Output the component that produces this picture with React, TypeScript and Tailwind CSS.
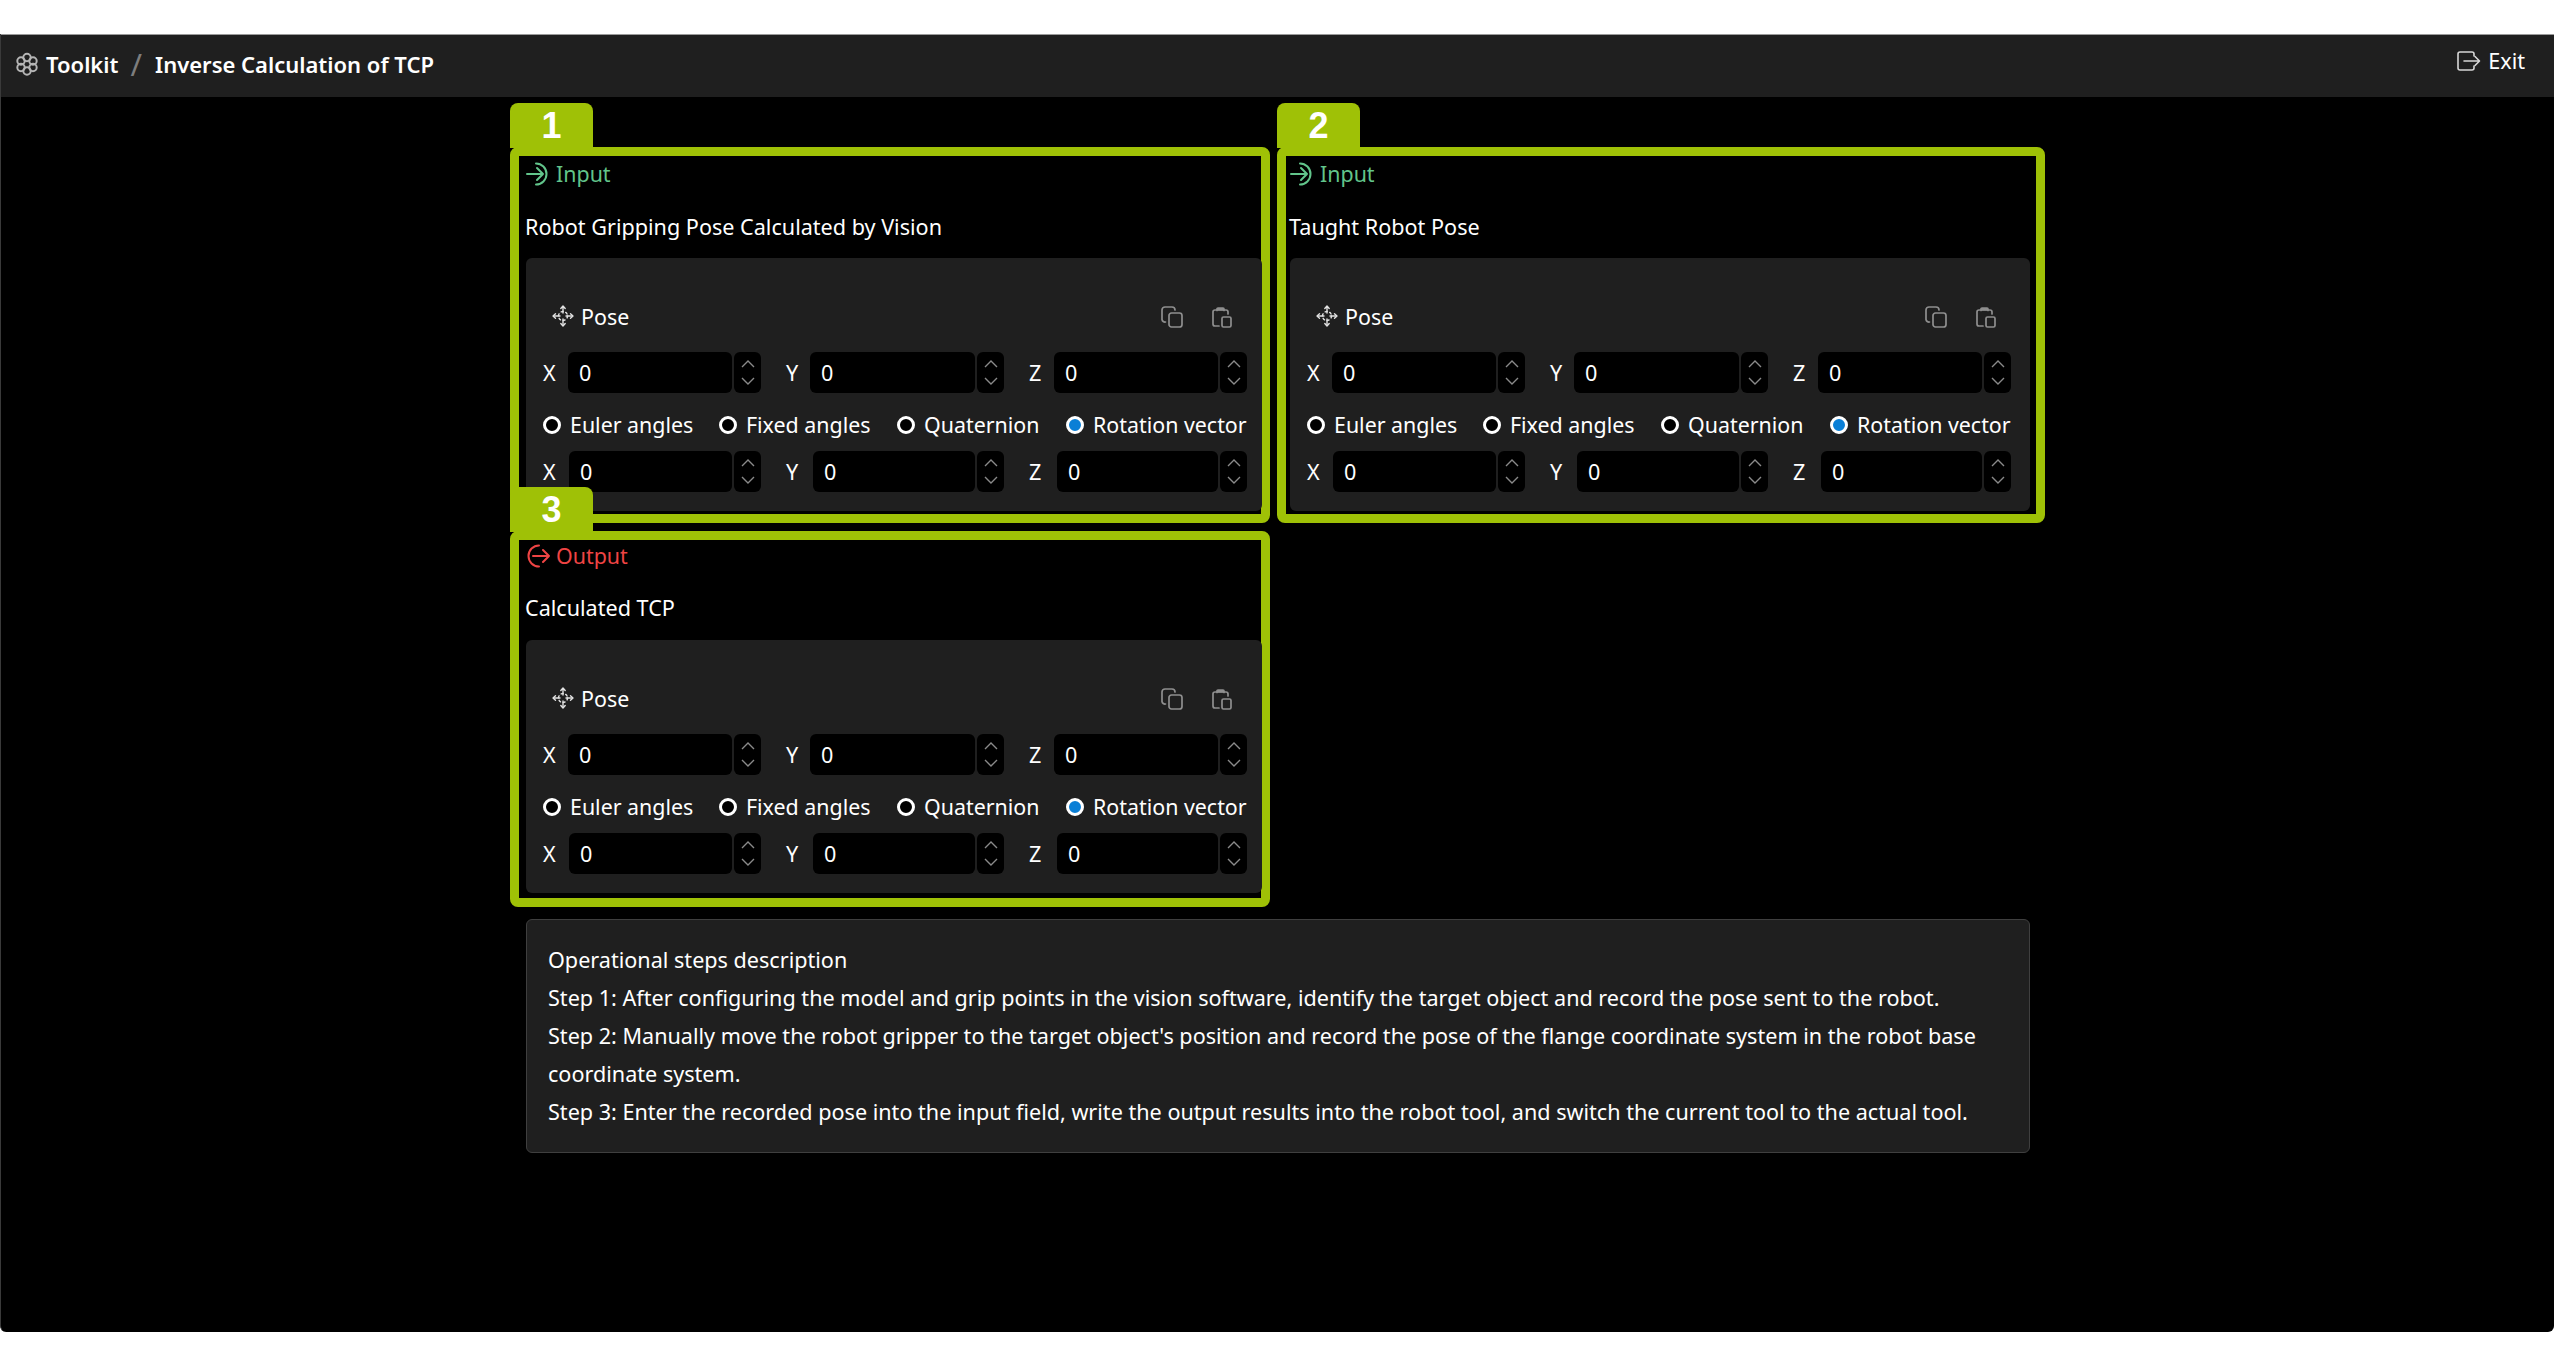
const Logo = () => (
  <svg width="24" height="24" viewBox="0 0 24 24" fill="none" stroke="#b5b5b5" strokeWidth="2" className="shrink-0">
    <circle cx="12" cy="5.500" r="3.700" />
    <circle cx="6" cy="9" r="3.700" />
    <circle cx="18" cy="9" r="3.700" />
    <circle cx="6" cy="15.500" r="3.700" />
    <circle cx="18" cy="15.500" r="3.700" />
    <circle cx="12" cy="19" r="3.700" />
  </svg>
);

const ExitIcon = () => (
  <svg width="24" height="20" viewBox="0 0 24 20" fill="none" stroke="#d6d6d6" strokeWidth="1.6" strokeLinecap="round" strokeLinejoin="round" className="shrink-0">
    <path d="M17 5V3a2 2 0 0 0-2-2H3a2 2 0 0 0-2 2v14a2 2 0 0 0 2 2h12a2 2 0 0 0 2-2v-2" />
    <path d="M7 10h15M18 5.500l4.500 4.500-4.500 4.500" />
  </svg>
);

const InputIcon = () => (
  <svg width="24" height="24" viewBox="0 0 24 24" fill="none" stroke="#62c58b" strokeWidth="2" strokeLinecap="round" strokeLinejoin="round" className="shrink-0">
    <path d="M10 1.500a10.500 10.500 0 0 1 0 21" />
    <path d="M1 12h16M11 6l6 6-6 6" />
  </svg>
);

const OutputIcon = () => (
  <svg width="24" height="24" viewBox="0 0 24 24" fill="none" stroke="#ef4444" strokeWidth="2" strokeLinecap="round" strokeLinejoin="round" className="shrink-0">
    <path d="M13 1.500a10.500 10.500 0 0 0 0 21" />
    <path d="M7 12h16M17 6l6 6-6 6" />
  </svg>
);

const PoseIcon = () => (
  <svg width="22" height="22" viewBox="0 0 22 22" fill="none" stroke="#e2e2e2" strokeWidth="1.4" strokeLinecap="round" strokeLinejoin="round" className="shrink-0">
    <path d="M11 2v6M11 14v6M2 11h6M14 11h6" />
    <path d="M8.800 3.500 11 1l2.200 2.500M8.800 18.500 11 21l2.200-2.500M3.500 8.800 1 11l2.500 2.200M18.500 8.800 21 11l-2.500 2.200" />
    <circle cx="11" cy="11" r="4.500" strokeDasharray="2 2.700" />
  </svg>
);

const CopyIcon = () => (
  <svg width="22" height="22" viewBox="0 0 22 22" fill="none" stroke="#8f8f8f" strokeWidth="1.7" strokeLinecap="round" strokeLinejoin="round" className="shrink-0">
    <rect x="8" y="7" width="13" height="14" rx="2.500" />
    <path d="M4.500 16A3 3 0 0 1 1 13.500V4a3 3 0 0 1 3-3h7a3 3 0 0 1 3 3" />
  </svg>
);

const PasteIcon = () => (
  <svg width="20" height="22" viewBox="0 0 20 22" fill="none" stroke="#8f8f8f" strokeWidth="1.7" strokeLinecap="round" strokeLinejoin="round" className="shrink-0">
    <rect x="10" y="11" width="9" height="10" rx="1.500" />
    <path d="M7 20H3a2 2 0 0 1-2-2V6a2 2 0 0 1 2-2h11a2 2 0 0 1 2 2v2" />
    <path d="M5 4.500V3a1 1 0 0 1 1-1h5a1 1 0 0 1 1 1v1.500" fill="#8f8f8f" />
  </svg>
);

const Stepper = () => (
  <div className="w-[27px] h-[41px] shrink-0 rounded-[6px] bg-black flex flex-col items-center justify-center gap-[9px]">
    <svg width="14" height="8" viewBox="0 0 14 8" fill="none" stroke="#8a8a8a" strokeWidth="1.4">
      <path d="M1 7l6-6 6 6" />
    </svg>
    <svg width="14" height="8" viewBox="0 0 14 8" fill="none" stroke="#8a8a8a" strokeWidth="1.4">
      <path d="M1 1l6 6 6-6" />
    </svg>
  </div>
);

const Field = ({ label, labelClass }: { label: string; labelClass: string }) => (
  <div className="w-[218px] flex items-center">
    <span className={`${labelClass} shrink-0 pt-[2px] text-[21.6px]`}>{label}</span>
    <div className="flex-1 h-[41px] bg-black rounded-[6px] flex items-center pt-[2px] pl-[11px] text-[21.6px]">0</div>
    <div className="w-[2px] shrink-0" />
    <Stepper />
  </div>
);

const Radio = ({ label, checked, className }: { label: string; checked?: boolean; className: string }) => (
  <div className={`flex items-center gap-[9px] ${className}`}>
    <span
      className={
        checked
          ? "w-[18px] h-[18px] rounded-full border-[3px] border-white bg-[#0a7fd6]"
          : "w-[18px] h-[18px] rounded-full border-[3px] border-white bg-black"
      }
    />
    <span className="text-[21.4px]">{label}</span>
  </div>
);

const PosePanel = ({ panelClass }: { panelClass: string }) => (
  <div className={`${panelClass} h-[253px] rounded-[6px] bg-[#1f1f1f] pt-[40px] pl-[17px]`}>
    <div className="h-[36px] flex items-center">
      <div className="pl-[9px] flex items-center gap-[7px] w-[618px]">
        <PoseIcon />
        <span className="pt-[2px] text-[21.4px]">Pose</span>
      </div>
      <div className="mt-[2px] flex items-center gap-[29px]">
        <CopyIcon />
        <PasteIcon />
      </div>
    </div>
    <div className="mt-[18px] flex gap-[25px]">
      <Field label="X" labelClass="w-[25px]" />
      <Field label="Y" labelClass="w-[24px]" />
      <Field label="Z" labelClass="w-[25px]" />
    </div>
    <div className="h-[58px] pt-[6px] flex items-center">
      <Radio label="Euler angles" className="w-[176px]" />
      <Radio label="Fixed angles" className="w-[178px]" />
      <Radio label="Quaternion" className="w-[169px]" />
      <Radio label="Rotation vector" checked className="w-[190px]" />
    </div>
    <div className="flex gap-[25px]">
      <Field label="X" labelClass="w-[26px]" />
      <Field label="Y" labelClass="w-[27px]" />
      <Field label="Z" labelClass="w-[28px]" />
    </div>
  </div>
);

const StepBox = ({
  step,
  kind,
  title,
  boxClass,
  panelClass,
  headClass,
  kindClass,
  titleClass,
}: {
  step: number;
  kind: "Input" | "Output";
  title: string;
  boxClass: string;
  panelClass: string;
  headClass: string;
  kindClass: string;
  titleClass: string;
}) => (
  <div className={`relative h-[376px] border-[9px] border-[#9fc106] rounded-[8px] ${boxClass}`}>
    <div className="absolute left-[-9px] top-[-53px] z-10 w-[83px] h-[45px] rounded-t-[8px] bg-[#9fc106] flex items-center justify-center font-['Liberation_Sans',sans-serif] font-bold text-[36px]">
      {step}
    </div>
    <div className={headClass}>
      <div className={`${kindClass} flex items-center gap-[6px] text-[21.4px] ${kind === "Input" ? "text-[#62c58b]" : "text-[#ef4444]"}`}>
        {kind === "Input" ? <InputIcon /> : <OutputIcon />}
        <span>{kind}</span>
      </div>
      <div className={`${titleClass} -ml-[1px] flex items-center text-[21.6px]`}>{title}</div>
    </div>
    <PosePanel panelClass={panelClass} />
  </div>
);

export default function App() {
  return (
    <div className="bg-white pt-[34px] pb-[24px] pr-[1px] font-['Noto_Sans','Open_Sans',sans-serif] text-white">
      <div className="h-[1298px] bg-black rounded-b-[6px] border-l border-[#3a3a3a]">
        <header className="h-[63px] bg-[#1f1f1f] border-t border-[#9a9a9a] flex items-center justify-between pl-[14px] pr-[29px]">
          <div className="flex items-center -mt-[4px]">
            <Logo />
            <span className="ml-[7px] text-[22px] font-semibold">Toolkit</span>
            <span className="mx-[12px] text-[31px] leading-none text-[#7d7d7d]">/</span>
            <span className="ml-[1px] text-[22px] font-semibold">Inverse Calculation of TCP</span>
          </div>
          <div className="flex items-center gap-[7px] -mt-[10px]">
            <div className="ml-[2px]">
              <ExitIcon />
            </div>
            <span className="text-[21.6px]">Exit</span>
          </div>
        </header>

        <main className="w-[1535px] mx-auto pt-[50px]">
          <div className="grid grid-cols-[760px_768px] gap-x-[7px] gap-y-[8px]">
            <StepBox
              step={1}
              kind="Input"
              title="Robot Gripping Pose Calculated by Vision"
              boxClass="pl-[7px] pr-[1px]"
              panelClass="w-[736px]"
              headClass="h-[102px]"
              kindClass="h-[36px]"
              titleClass="mt-[5px] h-[60px]"
            />
            <StepBox
              step={2}
              kind="Input"
              title="Taught Robot Pose"
              boxClass="pl-[4px] pr-[6px]"
              panelClass="w-[740px]"
              headClass="h-[102px]"
              kindClass="h-[36px]"
              titleClass="mt-[5px] h-[60px]"
            />
            <StepBox
              step={3}
              kind="Output"
              title="Calculated TCP"
              boxClass="pl-[7px] pr-[1px]"
              panelClass="w-[736px]"
              headClass="h-[100px]"
              kindClass="h-[32px]"
              titleClass="mt-[6px] h-[60px]"
            />
          </div>

          <section className="ml-[16px] mt-[12px] w-[1504px] h-[234px] rounded-[6px] border border-[#3f3f3f] bg-[#1f1f1f] pt-[21px] pl-[21px] pr-[30px] text-[21.6px] leading-[38px]">
            <p>Operational steps description</p>
            <p>Step 1: After configuring the model and grip points in the vision software, identify the target object and record the pose sent to the robot.</p>
            <p>Step 2: Manually move the robot gripper to the target object's position and record the pose of the flange coordinate system in the robot base coordinate system.</p>
            <p>Step 3: Enter the recorded pose into the input field, write the output results into the robot tool, and switch the current tool to the actual tool.</p>
          </section>
        </main>
      </div>
    </div>
  );
}
